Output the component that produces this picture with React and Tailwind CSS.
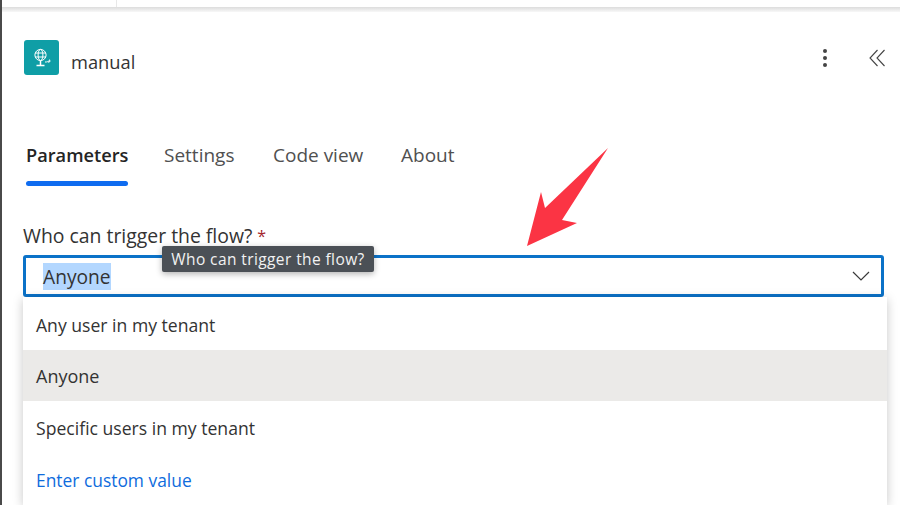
const font = { fontFamily: '"Open Sans", "Noto Sans", sans-serif' };

function GlobeIcon() {
  return (
    <svg width="20" height="22" viewBox="0 0 20 22" fill="none" stroke="#fff" strokeWidth="1">
      <circle cx="8.5" cy="8" r="5.6" />
      <ellipse cx="8.5" cy="8" rx="2.4" ry="5.6" />
      <path d="M3 6h11M3 10h11" />
      <path d="M8.5 14v4M4.5 18.5h8" strokeWidth="1.5" />
      <path d="M13 15c2 .2 3.600-.6 4.600-1.800" />
      <path d="M16 15.200l2-.6-.4-2" />
    </svg>
  );
}

export default function App() {
  return (
    <div className="relative w-[900px] h-[505px] overflow-hidden bg-white border-l-2 border-[#4a4a4a] flex flex-col" style={font}>
      <div className="h-[7px] shrink-0 flex">
        <div className="w-[115px] border-r border-[#e8e8e8]" />
      </div>
      <div className="h-[5px] shrink-0 bg-gradient-to-b from-[#dcdcdc] to-[#f8f8f8]" />

      <div className="flex items-center pl-[22px] pr-[14px] mt-[28px] h-[35px] shrink-0">
        <div className="w-[35px] h-[35px] rounded-[3px] bg-[#0f9ea6] flex items-center justify-center">
          <GlobeIcon />
        </div>
        <span className="ml-[12px] text-[18.3px] leading-[28px] text-[#333] mt-[8px]">manual</span>
        <div className="ml-auto flex items-center">
          <svg width="8" height="18" viewBox="0 0 8 18" fill="#444">
            <circle cx="4" cy="2" r="2" />
            <circle cx="4" cy="9" r="2" />
            <circle cx="4" cy="16" r="2" />
          </svg>
          <svg className="ml-[40px]" width="17" height="18" viewBox="0 0 17 18" fill="none" stroke="#444" strokeWidth="1.1">
            <path d="M8.500 1L1 9l7.500 8" />
            <path d="M15.500 1L8 9l7.500 8" />
          </svg>
        </div>
      </div>

      <div className="flex pl-[24px] mt-[67px] shrink-0">
        <div className="flex flex-col w-[102px] mr-[36px]">
          <span className="text-[18.2px] leading-[26px] font-semibold text-[#242424] whitespace-nowrap">Parameters</span>
          <div className="h-[5px] mt-[13px] rounded-full bg-[#0f6cf0]" />
        </div>
        <span className="text-[19px] leading-[26px] text-[#505050] w-[72px] mr-[37px] whitespace-nowrap">Settings</span>
        <span className="text-[19px] leading-[26px] text-[#505050] w-[92px] mr-[36px] whitespace-nowrap">Code view</span>
        <span className="text-[19px] leading-[26px] text-[#505050] whitespace-nowrap">About</span>
      </div>

      <div className="pl-[21px] mt-[37px] shrink-0 text-[19.4px] leading-[26px] text-[#333] whitespace-nowrap flex items-start">
        <span>Who can trigger the flow?</span>
        <span className="text-[#a4262c] text-[16px] ml-[5px]">*</span>
      </div>

      <div className="ml-[21px] w-[861px] h-[42px] mt-[6px] shrink-0 border-[3px] border-[#0b72c8] rounded-[3px] flex items-center pl-[17px] pr-[11px]">
        <span className="bg-[#b3d7ff] h-[27px] mt-[1px] leading-[27px] text-[19.2px] text-[#333]">Anyone</span>
        <svg className="ml-auto" width="18" height="10" viewBox="0 0 18 10" fill="none" stroke="#3a3a3a" strokeWidth="1.2">
          <path d="M1 1l8 8 8-8" />
        </svg>
      </div>

      <div className="ml-[21px] w-[864px] flex-1 flex flex-col bg-white shadow-[0_2px_10px_rgba(0,0,0,0.22)] text-[17.6px] text-[#333]">
        <div className="h-[53px] shrink-0 flex items-center pl-[13px] pt-[3px]">Any user in my tenant</div>
        <div className="h-[51px] shrink-0 flex items-center pl-[13px] pt-[2px] bg-[#ebeae8] text-[18px]">Anyone</div>
        <div className="h-[52px] shrink-0 flex items-center pl-[13px] pt-[2px]">Specific users in my tenant</div>
        <div className="h-[52px] shrink-0 flex items-center pl-[13px] pt-[2px] text-[#0f6cdd] text-[17.4px]">Enter custom value</div>
      </div>

      <div className="absolute left-[160px] top-[246px] w-[212px] h-[26px] pt-[1px] bg-[#4b5056] rounded-[2px] shadow-[0_2px_6px_rgba(0,0,0,0.3)] flex items-center justify-center text-[15.5px] tracking-[0.4px] text-[#f2f2f2] whitespace-nowrap">
        Who can trigger the flow?
      </div>

      <svg className="absolute left-[-2px] top-0 pointer-events-none" width="900" height="505" viewBox="0 0 900 505">
        <polygon points="608,148 562,220 577,223 527,246 541,192 545,208" fill="#fb3444" />
      </svg>
    </div>
  );
}
